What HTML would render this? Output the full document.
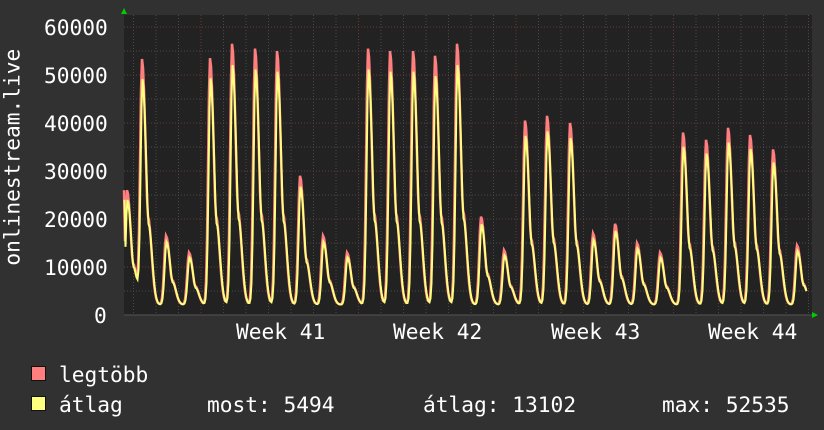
<!DOCTYPE html>
<html><head><meta charset="utf-8"><style>
html,body{margin:0;padding:0;background:#313131;}
body{width:824px;height:430px;overflow:hidden;position:relative;font-family:"DejaVu Sans Mono","Liberation Mono",monospace;color:#fff;}
.t{position:absolute;font-size:21.2px;white-space:pre;line-height:1;}
.sq{position:absolute;width:13px;height:13px;border:1px solid #111;}
</style></head><body>
<svg id="g" width="824" height="430" style="position:absolute;left:0;top:0">
<rect x="124" y="15" width="688" height="300" fill="#222"/>
<g id="grid"></g>
<g id="data"></g>
<polygon points="121,14 124,8 127,14" fill="#0c0"/>
<polygon points="812,312 818,315 812,318" fill="#0c0"/>
</svg>
<div class="t" style="left:44px;top:17px">60000</div>
<div class="t" style="left:44px;top:65px">50000</div>
<div class="t" style="left:44px;top:113px">40000</div>
<div class="t" style="left:44px;top:161px">30000</div>
<div class="t" style="left:44px;top:209px">20000</div>
<div class="t" style="left:44px;top:257px">10000</div>
<div class="t" style="left:94px;top:305px">0</div>
<div class="t" style="left:-88px;top:155px;transform:rotate(-90deg);width:200px;text-align:center">onlinestream.live</div>
<div class="t" style="left:236px;top:321px">Week 41</div>
<div class="t" style="left:393px;top:321px">Week 42</div>
<div class="t" style="left:551px;top:321px">Week 43</div>
<div class="t" style="left:708px;top:321px">Week 44</div>
<div class="sq" style="left:31px;top:366px;background:#ff7f7f"></div>
<div class="sq" style="left:31px;top:396px;background:#ffff7f"></div>
<div class="t" style="left:59px;top:364px">legtöbb</div>
<div class="t" style="left:59px;top:394px">átlag</div>
<div class="t" style="left:207px;top:394px">most: 5494</div>
<div class="t" style="left:423px;top:394px">átlag: 13102</div>
<div class="t" style="left:662px;top:394px">max: 52535</div>
<script>
var NS="http://www.w3.org/2000/svg";
function el(p,n,a){var e=document.createElementNS(NS,n);for(var k in a)e.setAttribute(k,a[k]);p.appendChild(e);return e;}
var grid=document.getElementById("grid"),data=document.getElementById("data");
for(var v=0;v<=60000;v+=5000){var y=315-v*0.0048;el(grid,"line",{x1:124,x2:812,y1:y,y2:y,stroke:(v%10000==0&&v>0)?"#6a3a3a":"#4a4a4a","stroke-dasharray":"1,2"});}
for(var x=201-22.5*3;x<812;x+=22.5){var maj=Math.abs(((x-201)/157.5)-Math.round((x-201)/157.5))<0.01;
el(grid,"line",{x1:x,x2:x,y1:15,y2:315,stroke:maj?"#6a3a3a":"#4a4a4a","stroke-dasharray":"1,2"});}
el(grid,"line",{x1:124,x2:812,y1:315,y2:315,stroke:"#555"});
var peaks=[[127,26000],[142,53000],[166,16500],[189,13000],[210,53500],[232,56500],[255,55500],[277,55000],[300,29000],[323,16500],[347,13000],[368,55500],[390,55000],[413,55000],[435,54000],[457,56500],[481,20500],[504,13500],[525,40500],[547,41500],[570,40000],[593,17000],[615,19000],[637,15000],[660,13000],[683,38000],[706,36500],[728,39000],[750,37500],[773,34500],[797,14500]];
function val(x,k){var s=2200;for(var i=0;i<peaks.length;i++){var d=x-peaks[i][0];var p=peaks[i][1]*k-2200;if(p<0)p=0;
var w=d<0?2.6:5.5;var f=Math.exp(-Math.pow(d/w,2));var g=d>0?0.4*Math.exp(-Math.pow((d-6)/5,2)):0;s+=p*Math.max(f,g*0.9);}return s;}
var pr="",py="";
for(var x=124;x<=806;x+=1){var r=val(x,1),yv=val(x,0.95)*0.97;
if(x==124){r=26000;yv=24000;}
var c=(x==124?"M":" L");
pr+=c+x+","+(315-r*0.0048).toFixed(1);py+=c+(x+0.5)+","+(315-yv*0.0048).toFixed(1);}
el(data,"path",{d:pr,fill:"none",stroke:"#ff7f7f","stroke-width":2.5});
el(data,"path",{d:py,fill:"none",stroke:"#ffff7f","stroke-width":2});
</script>
</body></html>
